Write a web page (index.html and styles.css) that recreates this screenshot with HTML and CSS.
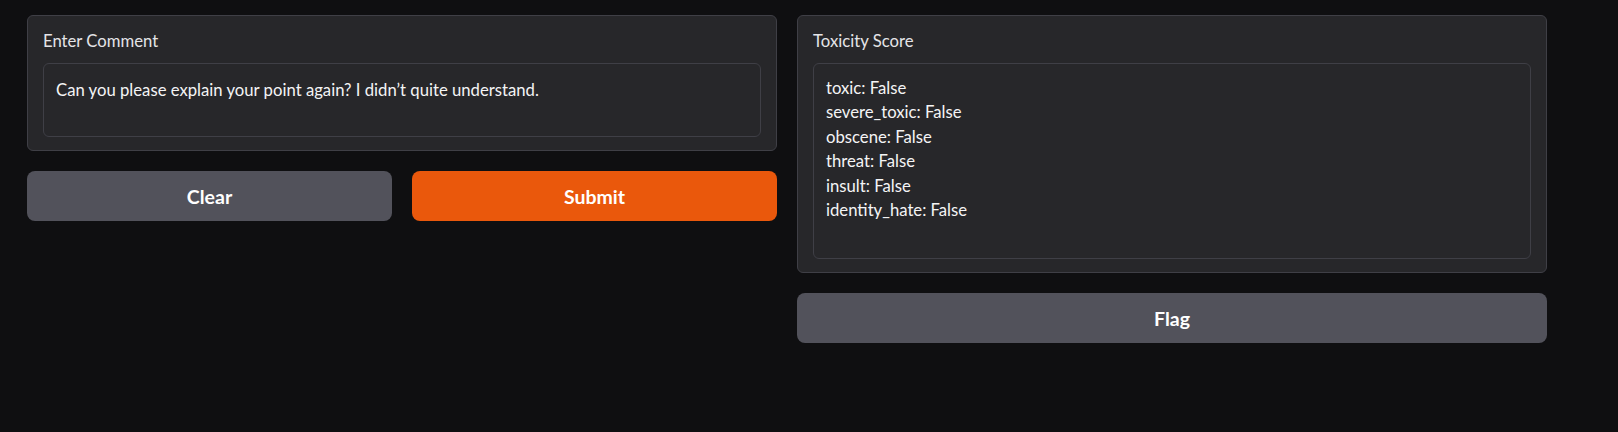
FILE: index.html
```html
<!DOCTYPE html>
<html lang="en">
<head>
<meta charset="utf-8">
<title>Toxicity</title>
<link rel="stylesheet" href="styles.css">
</head>
<body>
<div class="app">
  <div class="col">
    <div class="block">
      <label class="label">Enter Comment</label>
      <div class="field lines-2 comment">Can you please explain your point again? I didn’t quite understand.</div>
    </div>
    <div class="btn-row">
      <button class="btn secondary">Clear</button>
      <button class="btn primary">Submit</button>
    </div>
  </div>
  <div class="col">
    <div class="block">
      <label class="label">Toxicity Score</label>
      <div class="field lines-7">toxic: False<br>severe_toxic: False<br>obscene: False<br>threat: False<br>insult: False<br>identity_hate: False</div>
    </div>
    <div class="btn-row">
      <button class="btn secondary">Flag</button>
    </div>
  </div>
</div>
</body>
</html>
```

FILE: styles.css
```css
* { box-sizing: border-box; }
html, body {
  margin: 0;
  background: #0f0f11;
  font-family: Lato, "Liberation Sans", sans-serif;
  color: #f4f4f5;
}
body {
  height: 432px;
  overflow: hidden;
}
.app {
  display: flex;
  gap: 20px;
  padding: 15px 0 0 27px;
  width: 1547px;
}
.col {
  flex: 1 1 0;
  display: flex;
  flex-direction: column;
  gap: 20px;
}
.block {
  background: #27272a;
  border: 1px solid #3f3f46;
  border-radius: 6px;
  padding: 15px 15px 13px;
  display: flex;
  flex-direction: column;
}
.label {
  font-size: 16.7px;
  line-height: 20px;
  color: #e4e4e7;
  margin-bottom: 12px;
}
.field {
  background: #27272a;
  border: 1px solid #3f3f46;
  border-radius: 6px;
  padding: 12px 12px;
  font-size: 16.7px;
  line-height: 24.4px;
  color: #f4f4f5;
}
.comment {
  padding-top: 14px;
  padding-bottom: 10px;
}
.lines-2 { height: 74px; }
.lines-7 { height: 196px; }
.btn-row {
  display: flex;
  gap: 20px;
}
.btn {
  flex: 1 1 0;
  height: 50px;
  border: none;
  border-radius: 8px;
  font-family: Lato, "Liberation Sans", sans-serif;
  font-weight: 700;
  font-size: 19.5px;
  color: #ffffff;
  cursor: pointer;
}
.secondary { background: #52525b; }
.primary { background: #ea580c; }
```
